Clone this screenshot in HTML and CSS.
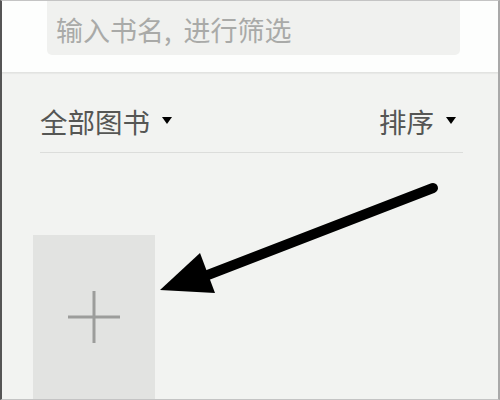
FILE: index.html
```html
<!DOCTYPE html>
<html lang="zh">
<head>
<meta charset="utf-8">
<link rel="stylesheet" href="styles.css">
</head>
<body>
<div class="frame">
  <div class="header">
    <div class="search">输入书名, 进行筛选</div>
  </div>
  <div class="toolbar">
    <div class="filter">全部图书<span class="caret"></span></div>
    <div class="filter">排序<span class="caret"></span></div>
  </div>
  <div class="shelf">
    <div class="book-add">
      <svg class="plus" width="52" height="52" viewBox="0 0 52 52">
        <rect x="24.5" y="0" width="3" height="52" fill="#9c9d9b"/>
        <rect x="0" y="24.5" width="52" height="3" fill="#9c9d9b"/>
      </svg>
    </div>
  </div>
  <svg class="arrow" width="500" height="400" viewBox="0 0 500 400">
    <line x1="433" y1="188" x2="200" y2="278" stroke="#000" stroke-width="10" stroke-linecap="round"/>
    <polygon points="160,290 200,253 215,293" fill="#000"/>
  </svg>
</div>
</body>
</html>
```

FILE: styles.css
```css
* { box-sizing: border-box; }
html, body { margin: 0; padding: 0; }
body {
  font-family: "Noto Sans CJK SC", "Noto Sans", sans-serif;
  background: #f2f3f1;
}
.frame {
  position: relative;
  width: 500px;
  height: 400px;
  overflow: hidden;
  background: #f2f3f1;
  border-top: 1px solid #c4c4c4;
  border-right: 2px solid #a9a9a9;
  border-bottom: 1px solid #c4c4c4;
  border-left: 2px solid #555;
}
.header {
  height: 72px;
  background: #fdfefd;
  padding: 0 38px 0 45px;
  border-bottom: 1px solid #e2e3e1;
  box-shadow: 0 1px 1px rgba(0,0,0,0.04);
}
.search {
  height: 54px;
  background: #f0f1ef;
  border-radius: 0 0 5px 5px;
  padding-left: 9px;
  padding-top: 11px;
  font-size: 27px;
  line-height: 36px;
  color: #a9aaa8;
  white-space: pre;
  word-spacing: 6px;
}
.toolbar {
  display: flex;
  justify-content: space-between;
  align-items: center;
  margin: 0 35px 0 38px;
  padding: 30px 7px 13px 0;
  border-bottom: 1px solid #dcdddb;
}
.filter {
  display: flex;
  align-items: center;
  font-size: 27.5px;
  line-height: 36px;
  color: #555654;
}
.caret {
  width: 0;
  height: 0;
  margin-left: 12px;
  margin-top: -2px;
  border-left: 5.5px solid transparent;
  border-right: 5.5px solid transparent;
  border-top: 7px solid #000;
}
.shelf {
  padding: 82px 0 0 31px;
}
.book-add {
  width: 122px;
  height: 170px;
  background: #e2e3e1;
  display: flex;
  justify-content: center;
  padding-top: 56px;
}
.plus { display: block; }
.arrow {
  position: absolute;
  left: -2px;
  top: -1px;
}
```
